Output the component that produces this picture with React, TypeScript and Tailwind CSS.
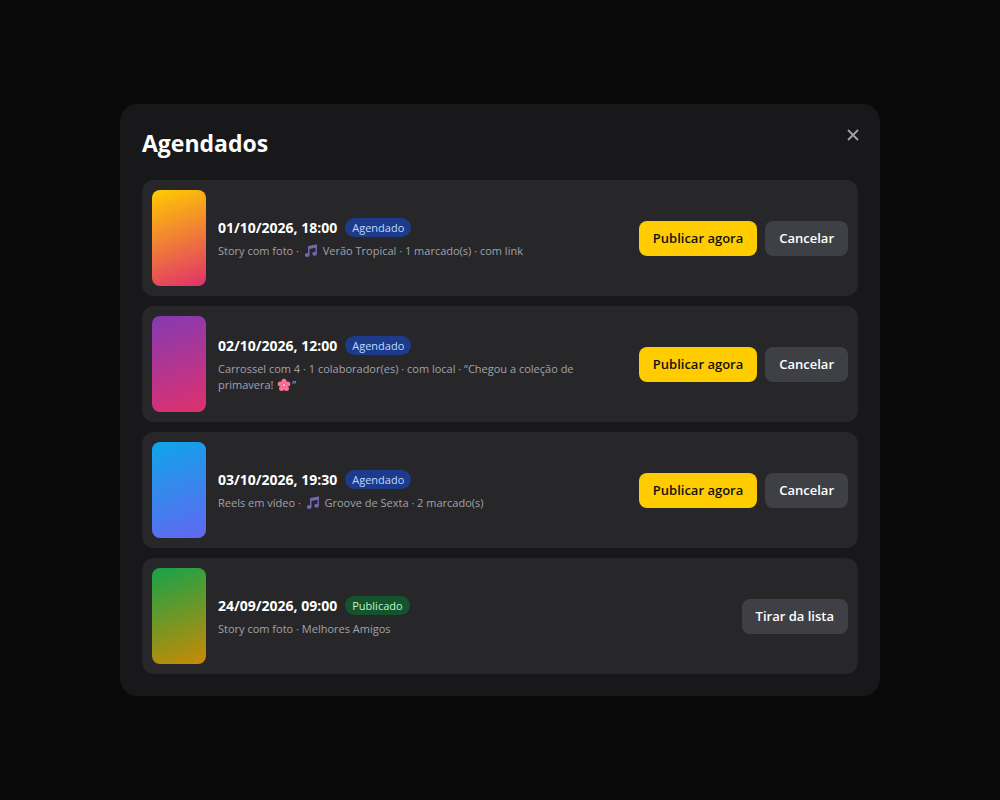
import type { ReactNode } from "react";

type Status = "Agendado" | "Publicado";

type Item = {
  date: string;
  status: Status;
  thumb: string;
  details: ReactNode;
};

function MusicNote() {
  return (
    <svg viewBox="0 0 14 14" aria-hidden="true" className="mx-0.5 inline-block size-3.5 align-[-3px]">
      <path d="M4.8 10.8V2.8L12.2 1.4v8" fill="none" stroke="#7467ad" strokeWidth="1.5" />
      <path d="M4.1 2.2 12.9.6v3L4.1 5.2Z" fill="#7467ad" />
      <ellipse cx="3.2" cy="11" rx="2.3" ry="2" fill="#7467ad" />
      <ellipse cx="10.6" cy="9.8" rx="2.3" ry="2" fill="#7467ad" />
    </svg>
  );
}

function Blossom() {
  return (
    <svg viewBox="0 0 14 14" aria-hidden="true" className="mx-px inline-block size-3.5 align-[-3px]">
      <g fill="#ff7397">
        <circle cx="7" cy="3.2" r="2.5" />
        <circle cx="10.8" cy="6" r="2.5" />
        <circle cx="9.4" cy="10.4" r="2.5" />
        <circle cx="4.6" cy="10.4" r="2.5" />
        <circle cx="3.2" cy="6" r="2.5" />
        <circle cx="7" cy="7.2" r="3.2" />
      </g>
      <path d="M7 7V4.2M7 7l2.7-.8M7 7l1.6 2.3M7 7l-1.6 2.3M7 7l-2.7-.8" stroke="#e0406f" strokeWidth=".7" />
      <circle cx="7" cy="7" r="1.1" fill="#ffd9de" />
    </svg>
  );
}

const items: Item[] = [
  {
    date: "01/10/2026, 18:00",
    status: "Agendado",
    thumb: "bg-[linear-gradient(160deg,#ffcc00,#e1306c)]",
    details: <>Story com foto · <MusicNote /> Verão Tropical · 1 marcado(s) · com link</>,
  },
  {
    date: "02/10/2026, 12:00",
    status: "Agendado",
    thumb: "bg-[linear-gradient(160deg,#833ab4,#e1306c)]",
    details: <>Carrossel com 4 · 1 colaborador(es) · com local · “Chegou a coleção de primavera! <Blossom />”</>,
  },
  {
    date: "03/10/2026, 19:30",
    status: "Agendado",
    thumb: "bg-[linear-gradient(160deg,#0ea5e9,#6366f1)]",
    details: <>Reels em vídeo · <MusicNote /> Groove de Sexta · 2 marcado(s)</>,
  },
  {
    date: "24/09/2026, 09:00",
    status: "Publicado",
    thumb: "bg-[linear-gradient(160deg,#16a34a,#ca8a04)]",
    details: <>Story com foto · Melhores Amigos</>,
  },
];

const badgeStyles: Record<Status, string> = {
  Agendado: "bg-[#1e3a8a] text-[#bfdbfe]",
  Publicado: "bg-[#14532d] text-[#bbf7d0]",
};

const buttonBase = "rounded-lg px-3.5 py-2 text-[13px] leading-[19px] font-semibold whitespace-nowrap";

function ScheduledRow({ item }: { item: Item }) {
  return (
    <li className="flex items-center gap-3 rounded-xl bg-[#27272a] p-2.5">
      <div className={`h-24 w-[54px] shrink-0 rounded-lg ${item.thumb}`} />
      <div className="min-w-0 flex-1">
        <div className="flex items-center gap-2">
          <span className="text-sm leading-5 font-bold">{item.date}</span>
          <span className={`rounded-full px-[7px] text-[11px] leading-[19px] ${badgeStyles[item.status]}`}>
            {item.status}
          </span>
        </div>
        <p className="mt-[5px] text-[11px] leading-4 text-[#a1a1aa]">{item.details}</p>
      </div>
      <div className="flex shrink-0 gap-2">
        {item.status === "Agendado" ? (
          <>
            <button type="button" className={`${buttonBase} bg-[#ffcc00] text-[#111111]`}>
              Publicar agora
            </button>
            <button type="button" className={`${buttonBase} bg-[#3f3f46] text-white`}>
              Cancelar
            </button>
          </>
        ) : (
          <button type="button" className={`${buttonBase} bg-[#3f3f46] text-white`}>
            Tirar da lista
          </button>
        )}
      </div>
    </li>
  );
}

export default function App() {
  return (
    <main className="flex min-h-screen items-center justify-center bg-[#0a0a0a] p-5 font-['Open_Sans','Noto_Sans',sans-serif] text-white">
      <section
        role="dialog"
        aria-labelledby="scheduled-title"
        className="w-full max-w-[760px] rounded-[18px] bg-[#18181b] p-[22px]"
      >
        <header className="mb-5 flex items-start justify-between">
          <h1 id="scheduled-title" className="text-[23px] leading-[34px] font-bold">
            Agendados
          </h1>
          <button type="button" aria-label="Fechar" className="-mr-1 flex size-[18px] items-center justify-center text-[#a1a1aa]">
            <svg viewBox="0 0 12 12" className="size-3" fill="none" stroke="currentColor" strokeWidth="1.8">
              <path d="M1 1l10 10M11 1L1 11" />
            </svg>
          </button>
        </header>
        <ul className="flex flex-col gap-2.5">
          {items.map((item) => (
            <ScheduledRow key={item.date} item={item} />
          ))}
        </ul>
      </section>
    </main>
  );
}
